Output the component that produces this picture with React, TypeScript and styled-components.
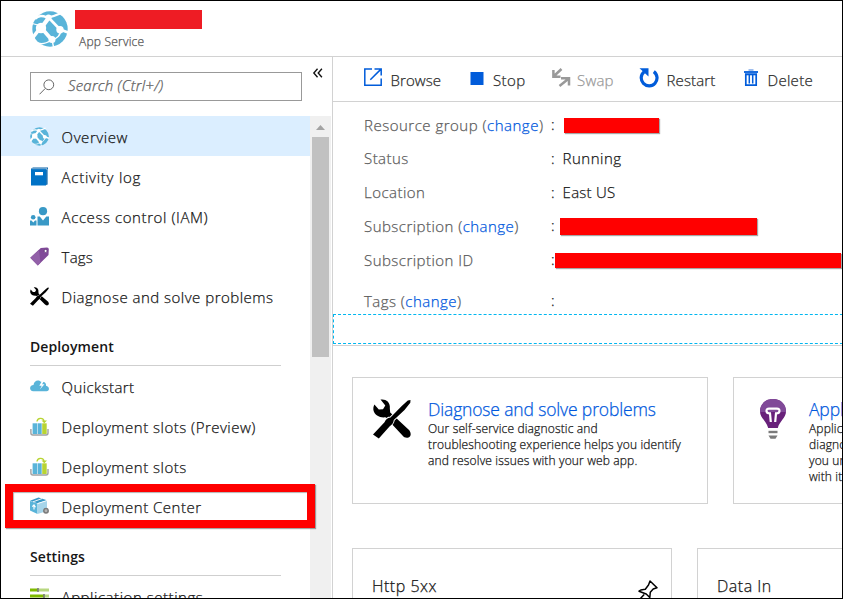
import React from "react";
import styled, { createGlobalStyle, css } from "styled-components";

const GlobalStyle = createGlobalStyle`
  * { box-sizing: border-box; }
  body { margin: 0; background: #fff; overflow: hidden; }
  svg { display: block; flex: none; }
`;

const Window = styled.div`
  width: 843px;
  height: 599px;
  border: 1px solid #000;
  background: #fff;
  overflow: hidden;
  display: flex;
  flex-direction: column;
  font-family: "Open Sans", "Noto Sans", sans-serif;
  font-weight: 300;
  -webkit-text-stroke-width: 0.25px;
  color: #161616;
  white-space: nowrap;
`;

/* ---------- header ---------- */

const Header = styled.header`
  flex: none;
  height: 56px;
  border-bottom: 1px solid #d2d2d2;
  display: flex;
  padding: 9px 0 0 31px;
  > svg { margin-top: 1px; }
`;

const TitleBlock = styled.div`
  margin-left: 7px;
`;

const RedactedName = styled.div`
  width: 127px;
  height: 19px;
  background: #ee1c24;
`;

const Subtitle = styled.div`
  margin: 4px 0 0 4px;
  font-size: 12px;
  line-height: 18px;
  letter-spacing: 0.22px;
  color: #555;
`;

const Body = styled.div`
  flex: 1;
  min-height: 0;
  display: flex;
`;

/* ---------- sidebar ---------- */

const Sidebar = styled.nav`
  flex: none;
  width: 332px;
  border-right: 1px solid #d2d2d2;
  display: flex;
  flex-direction: column;
`;

const SearchRow = styled.div`
  flex: none;
  height: 59px;
  padding: 15px 0 0 29px;
  display: flex;
  align-items: flex-start;
`;

const SearchBox = styled.div`
  width: 272px;
  height: 29px;
  border: 1px solid #999;
  display: flex;
  align-items: center;
  padding-left: 8px;
`;

const Placeholder = styled.span`
  margin: -3px 0 0 13px;
  font-size: 15px;
  font-style: italic;
  letter-spacing: 0.22px;
  color: #5e5e5e;
`;

const Collapse = styled.span`
  margin: -4px 0 0 9.5px;
`;

const MenuArea = styled.div`
  flex: 1;
  min-height: 0;
  display: flex;
`;

const Menu = styled.div`
  position: relative;
  width: 309px;
  height: 100%;
`;

const MenuRow = styled.div<{ $selected?: boolean }>`
  height: 40px;
  padding-left: 29px;
  display: flex;
  align-items: center;
  background: ${(p) => (p.$selected ? "#dbeeff" : "transparent")};
`;

const MenuLabel = styled.span<{ $spacing?: number }>`
  margin: 2px 0 0 12.6px;
  font-size: 15px;
  line-height: 20px;
  letter-spacing: ${(p) => p.$spacing ?? 0.49}px;
`;

const SectionTitle = styled.div<{ $spacing?: number }>`
  height: 50px;
  width: 251px;
  margin-left: 29px;
  padding: 21px 0 0 0;
  border-bottom: 1px solid #cfcfcf;
  font-size: 14px;
  font-weight: 600;
  -webkit-text-stroke-width: 0;
  line-height: 20px;
  letter-spacing: ${(p) => p.$spacing ?? 0.1}px;
`;

const Highlight = styled.div`
  position: absolute;
  left: 4px;
  top: 368px;
  width: 310px;
  height: 44px;
  border: 8px solid #f00;
  box-shadow: 1px 1px 1px rgba(0, 0, 0, 0.35), inset 1px 1px 1px rgba(0, 0, 0, 0.3);
  z-index: 1;
`;

const ScrollTrack = styled.div`
  width: 21px;
  background: #f0f0f0;
  display: flex;
  flex-direction: column;
  padding: 9px 0 0 2px;
`;

const ScrollThumb = styled.div`
  width: 17px;
  height: 220px;
  margin-top: 7px;
  background: #c1c1c1;
`;

/* ---------- main ---------- */

const Main = styled.main`
  flex: 1;
  min-width: 0;
  overflow: hidden;
`;

const Toolbar = styled.div`
  height: 45px;
  border-bottom: 1px solid #d2d2d2;
  padding-left: 29.5px;
  display: grid;
  grid-template-columns: 107.5px 82px 87px 104px auto;
`;

const Command = styled.div<{ $disabled?: boolean; $gap: number; $spacing: number }>`
  display: flex;
  align-items: flex-start;
  gap: ${(p) => p.$gap}px;
  font-size: 15px;
  line-height: 20px;
  letter-spacing: ${(p) => p.$spacing}px;
  color: ${(p) => (p.$disabled ? "#999" : "#2b2b2b")};
  svg { margin-top: 10px; }
  span { margin-top: 13px; }
`;

const Essentials = styled.div`
  padding: 7px 0 0 31px;
`;

const Field = styled.div<{ $last?: boolean }>`
  height: 33.7px;
  display: flex;
  align-items: center;
  font-size: 15px;
  line-height: 20px;
  ${(p) => p.$last && css`margin-top: 7.6px;`}
`;

const FieldName = styled.div<{ $spacing?: number }>`
  width: 187px;
  margin-top: -2.2px;
  letter-spacing: ${(p) => p.$spacing ?? 0.46}px;
  color: #5c5c5c;
`;

const Link = styled.a`
  color: #0058dd;
`;

const Colon = styled.span`
  width: 4px;
  flex: none;
  margin-top: -3px;
`;

const Value = styled.span<{ $spacing?: number }>`
  margin: -2.2px 0 0 7.6px;
  letter-spacing: ${(p) => p.$spacing ?? 0.5}px;
`;

const Redaction = styled.span<{ $width: number; $height: number; $offset: number }>`
  flex: none;
  width: ${(p) => p.$width}px;
  height: ${(p) => p.$height}px;
  margin-left: ${(p) => p.$offset}px;
  background: #f00;
  box-shadow: 1px 1px 1px rgba(0, 0, 0, 0.35);
`;

const TagStrip = styled.div`
  height: 32px;
  margin-top: -4.6px;
  border-bottom: 1px solid #d2d2d2;
  padding-bottom: 1px;
`;

const TagDrop = styled.div`
  height: 30px;
  width: 520px;
  border: 1px dashed #00b7f0;
`;

const CardRow = styled.div<{ $top: number }>`
  display: flex;
  gap: 25px;
  padding: ${(p) => p.$top}px 0 0 19px;
`;

const Card = styled.section`
  flex: none;
  width: 356px;
  height: 127px;
  border: 1px solid #d2d2d2;
  display: flex;
  padding: 20px 0 0 19px;
`;

const CardIcon = styled.div<{ $inset?: number }>`
  width: 56px;
  flex: none;
  padding-left: ${(p) => p.$inset ?? 1}px;
  padding-top: 1px;
`;

const CardTitle = styled.h2`
  margin: 0 0 1px;
  font-size: 17.5px;
  line-height: 22px;
  font-weight: 300;
  letter-spacing: -0.15px;
  color: #0058dd;
`;

const CardLine = styled.div`
  font-size: 12px;
  line-height: 16px;
  letter-spacing: 0.15px;
`;

const ChartCard = styled.section`
  flex: none;
  width: 320px;
  height: 120px;
  border: 1px solid #d2d2d2;
  display: flex;
  justify-content: space-between;
  align-items: flex-start;
  padding: 26px 13px 0 19px;
  svg { margin-top: 5px; }
`;

const ChartTitle = styled.span`
  font-size: 16px;
  line-height: 22px;
  letter-spacing: 0.5px;
`;

/* ---------- icons ---------- */

const Globe = ({ size }: { size: number }) => (
  <svg width={size} height={size} viewBox="0 0 36 36">
    <circle cx="18" cy="18" r="17.7" fill="#59b4d9" />
    <g stroke="#fff" fill="none">
      <path d="M3 8 C7 3.500 11 5 16 6.500 C21 5.500 25 4 29.500 2" strokeWidth="2.400" />
      <path d="M17 6.500 L9.500 16.500" strokeWidth="4.200" />
      <path d="M17 7 L28 18.500" strokeWidth="2.600" />
      <path d="M9 16 L0.500 27" strokeWidth="3.600" />
      <path d="M9 16.500 L20 29" strokeWidth="3.800" />
      <path d="M10 15 L0 12.500" strokeWidth="1.200" />
      <path d="M20 28.500 C25 28 29 24 28.500 18.500" strokeWidth="1.500" />
      <path d="M28 18.500 L36 21.500" strokeWidth="2.800" />
      <path d="M20 28.500 L21.500 36 M6 32 C11 34 15 32 19.500 29" strokeWidth="1.400" />
    </g>
    <g fill="#fff">
      <circle cx="16.500" cy="6.500" r="3" />
      <circle cx="9" cy="17" r="5.200" />
      <circle cx="28" cy="18.700" r="3.700" />
      <circle cx="20" cy="28.600" r="3.500" />
    </g>
  </svg>
);

const LogBook = () => (
  <svg width="19" height="19" viewBox="0 0 19 19">
    <path d="M1 1.500 L3 0.500 H18 V17 L16.500 18" fill="#0a63a8" />
    <path d="M15.800 2 H17.300 V17" fill="none" stroke="#a8cdea" strokeWidth="0.800" />
    <rect x="1" y="2" width="15" height="16.500" fill="#0072c6" />
    <path d="M1.500 1.700 H17" stroke="#a8cdea" strokeWidth="0.700" />
    <rect x="5" y="5" width="8" height="3.300" fill="#fff" />
  </svg>
);

const People = () => (
  <svg width="19" height="19" viewBox="0 0 19 19" fill="#3999c6">
    <circle cx="13" cy="4.200" r="4.100" />
    <path d="M7.500 9.500 H9.800 L13 13.500 L16.300 9.500 H19 V18.500 H7.500 Z" />
    <circle cx="3.200" cy="10.300" r="2.300" />
    <path d="M0 13.500 H1.500 L3.300 15.500 L5 13.500 H6.500 V18.500 H0 Z" />
  </svg>
);

const Tag = () => (
  <svg width="19" height="19" viewBox="0 0 19 19">
    <path d="M0.300 10.800 L10.800 1 L17 0.400 Q19 0.500 18.800 2.500 L18.500 8 L7.800 18.500 Z" fill="#804998" />
    <path d="M0.300 10.800 L9 2.700 L10.500 15.700 L7.800 18.500 Z" fill="#9260a8" />
    <circle cx="15.600" cy="3.900" r="1.500" fill="#fff" stroke="#59306e" strokeWidth="0.700" />
  </svg>
);

const Tools = ({ width, height }: { width: number; height: number }) => (
  <svg width={width} height={height} viewBox="0 0 38 40" preserveAspectRatio="none">
    <path
      d="M7.500 0.600 C13 -0.500 17.500 3.500 16.800 9 L17.200 13.500 L36.300 31.200 C38.500 34 38 37.500 35.500 38.500 C33 39.200 31 38.300 29.500 36.500 L12.500 18.300 C7 19 1.500 16.500 0.400 11 C0.200 8.500 0.700 6.800 1.400 5.500 L5.800 10.500 L10 10.300 L12.300 6.500 Z"
      fill="#000"
    />
    <path
      d="M0 35.500 L11.500 23.200 C12.500 21 14.500 18.500 17.500 18.500 L28.500 7.200 L34.800 1.600 L37.500 1 L37.300 3.800 L31.500 11 L20.800 21 C20.500 24.500 18.500 26 16.500 27.500 L5.800 39.600 Z"
      fill="#000"
      stroke="#fff"
      strokeWidth="1.800"
      paintOrder="stroke"
    />
  </svg>
);

const CloudBolt = () => (
  <svg width="19" height="19" viewBox="0 0 19 19">
    <path d="M3.300 14.300 C-1.200 14 -0.800 8 3.500 8 C4 3.500 8.500 2.300 11 5 C14.500 4 16.500 6.300 16 8.800 C19.700 9.500 20 14 16.500 14.300 Z" fill="#59b4d9" />
    <path d="M12.500 3 L9.300 8.700 H11.800 L9.800 12.500 L14.500 7.300 H12 L14.500 3.300 Z" fill="#fff" />
  </svg>
);

const Slots = () => (
  <svg width="19" height="19" viewBox="0 0 19 19">
    <path d="M0.900 12 V16 Q0.900 18 2.900 18 H16 Q18 18 18 16 V12" fill="none" stroke="#a0a1a2" strokeWidth="1.400" />
    <rect x="2.600" y="6.300" width="4.600" height="10.700" fill="#59b4d9" />
    <rect x="7.700" y="6.300" width="4" height="10.700" fill="#59b4d9" />
    <rect x="12.200" y="6.300" width="4.500" height="10.700" fill="#b8d432" />
    <path d="M7 4.500 C7.500 0.800 13 0 14 4" fill="none" stroke="#b8d432" strokeWidth="1.400" />
    <path d="M11.500 3.500 H17 L14.300 6.300 Z" fill="#b8d432" />
  </svg>
);

const Package = () => (
  <svg width="19" height="19" viewBox="0 0 19 19">
    <path d="M0 4 L7.500 6.500 V17 L0 13.500 Z" fill="#59b4d9" />
    <path d="M7.500 6.500 L17 3.500 V14 L7.500 17 Z" fill="#a6d5ea" />
    <path d="M0 3.700 L8.500 0.500 L17 3.200 L7.500 6.300 Z" fill="#3999c6" />
    <path d="M3 4.800 L12 1.600 M7.500 6.600 L17 3.500" stroke="#fff" strokeWidth="0.900" />
    <path d="M4 12.500 V8 M2.300 9.700 L4 7.800 L5.500 10.300" stroke="#fff" strokeWidth="1.100" fill="none" />
    <circle cx="16" cy="13.800" r="2.200" fill="#b4b4b4" stroke="#7a7a7a" strokeWidth="1.500" />
  </svg>
);

const Sliders = () => (
  <svg width="19" height="19" viewBox="0 0 19 19">
    <path d="M0 3 H8 M0 9 H14 M0 15 H6" stroke="#7fba00" strokeWidth="3" />
    <path d="M8 3 H19 M14 9 H19 M6 15 H19" stroke="#b8d780" strokeWidth="3" />
    <path d="M8 1 V5 M14 7 V11" stroke="#7a7a7a" strokeWidth="1.600" />
  </svg>
);

const Magnifier = () => (
  <svg width="16" height="16" viewBox="0 0 16 16" fill="none" stroke="#666" strokeWidth="1">
    <circle cx="9.800" cy="5.800" r="4.900" />
    <path d="M6.200 9.500 L0.500 15.300" />
  </svg>
);

const DoubleChevron = () => (
  <svg width="12" height="10" viewBox="0 0 12 11" fill="none" stroke="#111" strokeWidth="1.500">
    <path d="M5.500 0.800 L1.400 5.500 L5.500 10.200 M10.300 0.800 L6.200 5.500 L10.300 10.200" />
  </svg>
);

const ArrowUp = () => (
  <svg width="17" height="5" viewBox="0 0 17 5">
    <path d="M8.500 0 L13 5 H4 Z" fill="#a3a3a3" />
  </svg>
);

const BrowseIcon = () => (
  <svg width="20" height="20" viewBox="0 0 20 20" fill="none" stroke="#015cda" strokeWidth="1.500">
    <path d="M9 1.900 H1.800 V18.200 H18.200 V11.500 M11.500 1.900 H18.200 V8.500 M18 2.100 L7.300 12.800" />
  </svg>
);

const StopIcon = () => (
  <svg width="14" height="20" viewBox="0 0 14 20">
    <rect x="0.500" y="5" width="13" height="13" fill="#015cda" />
  </svg>
);

const SwapIcon = () => (
  <svg width="19" height="21" viewBox="0 0 19 21" fill="none" stroke="#999" strokeWidth="2.500">
    <path d="M9.500 2 L2 9 M1.400 3 V9.700 H8.500" />
    <path d="M7.500 19 L16.500 11.800 M9 11.200 H17 V18.500" />
  </svg>
);

const RestartIcon = () => (
  <svg width="20" height="21" viewBox="0 0 20 21">
    <path d="M5.200 4.800 A7.900 7.900 0 1 0 14.800 4.600" fill="none" stroke="#015cda" strokeWidth="3.200" />
    <path d="M0.500 1.300 H9.500 V9.500 Z" fill="#015cda" />
  </svg>
);

const TrashIcon = () => (
  <svg width="16" height="20" viewBox="0 0 16 20">
    <path d="M5.500 3 H10.500" stroke="#7fa9e8" strokeWidth="1.500" />
    <path d="M1 5 H15" stroke="#015cda" strokeWidth="1.800" />
    <path d="M2.800 7 H13.200 V18.200 H2.800 Z" fill="#fff" stroke="#015cda" strokeWidth="1.700" />
    <path d="M6.300 7 V16.500 M9.700 7 V16.500" stroke="#015cda" strokeWidth="1.500" />
    <path d="M2 7 H14 V8.300 H2 Z" fill="#015cda" />
  </svg>
);

const Bulb = () => (
  <svg width="28" height="40" viewBox="0 0 28 40">
    <path d="M14 0 C22 0 27 5.500 27 12.500 C27 19 20.500 22 18.800 29 H9.200 C7.500 22 1 19 1 12.500 C1 5.500 6 0 14 0 Z" fill="#68217a" />
    <path d="M14 0 C22 0 27 5.500 27 12.500 V13 H1 V12.500 C1 5.500 6 0 14 0 Z" fill="#804998" />
    <path d="M11.800 23 L11 14.300 C6.500 14.500 6.500 9.600 10 9.600 H18 C21.500 9.600 21.500 14.500 17 14.300 L16.200 23" fill="none" stroke="#fff" strokeWidth="2.200" />
    <path d="M9.500 33 H18.500" stroke="#7a7a7a" strokeWidth="2.400" />
    <path d="M9.500 36.500 H18.500 L16.500 39.700 H11.500 Z" fill="#7a7a7a" />
  </svg>
);

const PinIcon = () => (
  <svg width="20" height="20" viewBox="0 0 20 20" fill="none" stroke="#000" strokeWidth="1.500" strokeLinejoin="round">
    <path d="M12 1 L19 7.800 L15.200 9 L12.300 12.200 L11.800 17.500 L8.200 14 L1 11.200 L2.800 10 L7.300 9.200 L10.500 5 Z M6.200 14.500 L1.500 19.500" />
  </svg>
);

/* ---------- page ---------- */

type Entry = { label: string; icon: React.ReactNode; spacing?: number; selected?: boolean };

const general: Entry[] = [
  { label: "Overview", icon: <Globe size={19} />, selected: true, spacing: 0.58 },
  { label: "Activity log", icon: <LogBook />, spacing: 0.74 },
  { label: "Access control (IAM)", icon: <People />, spacing: 0.58 },
  { label: "Tags", icon: <Tag />, spacing: 0.2 },
  { label: "Diagnose and solve problems", icon: <Tools width={19} height={19} /> },
];

const deployment: Entry[] = [
  { label: "Quickstart", icon: <CloudBolt />, spacing: 0.4 },
  { label: "Deployment slots (Preview)", icon: <Slots /> },
  { label: "Deployment slots", icon: <Slots /> },
  { label: "Deployment Center", icon: <Package /> },
];

const settings: Entry[] = [{ label: "Application settings", icon: <Sliders />, spacing: 0.54 }];

const MenuItems = ({ entries }: { entries: Entry[] }) => (
  <>
    {entries.map((e) => (
      <MenuRow key={e.label} $selected={e.selected}>
        {e.icon}
        <MenuLabel $spacing={e.spacing}>{e.label}</MenuLabel>
      </MenuRow>
    ))}
  </>
);

export default function App() {
  return (
    <>
      <GlobalStyle />
      <Window>
        <Header>
          <Globe size={36} />
          <TitleBlock>
            <RedactedName />
            <Subtitle>App Service</Subtitle>
          </TitleBlock>
        </Header>
        <Body>
          <Sidebar>
            <SearchRow>
              <SearchBox>
                <Magnifier />
                <Placeholder>Search (Ctrl+/)</Placeholder>
              </SearchBox>
              <Collapse>
                <DoubleChevron />
              </Collapse>
            </SearchRow>
            <MenuArea>
              <Menu>
                <MenuItems entries={general} />
                <SectionTitle $spacing={0.1}>Deployment</SectionTitle>
                <MenuItems entries={deployment} />
                <SectionTitle>Settings</SectionTitle>
                <MenuItems entries={settings} />
                <Highlight />
              </Menu>
              <ScrollTrack>
                <ArrowUp />
                <ScrollThumb />
              </ScrollTrack>
            </MenuArea>
          </Sidebar>
          <Main>
            <Toolbar>
              <Command $gap={8} $spacing={0.1}><BrowseIcon /><span>Browse</span></Command>
              <Command $gap={9} $spacing={0.4}><StopIcon /><span>Stop</span></Command>
              <Command $gap={6} $spacing={0.2} $disabled><SwapIcon /><span>Swap</span></Command>
              <Command $gap={7.5} $spacing={0.15}><RestartIcon /><span>Restart</span></Command>
              <Command $gap={8.5} $spacing={0.3}><TrashIcon /><span>Delete</span></Command>
            </Toolbar>
            <Essentials>
              <Field>
                <FieldName $spacing={0.5}>Resource group (<Link>change</Link>)</FieldName>
                <Colon>:</Colon>
                <Redaction $width={95} $height={15} $offset={9} />
              </Field>
              <Field>
                <FieldName>Status</FieldName>
                <Colon>:</Colon>
                <Value>Running</Value>
              </Field>
              <Field>
                <FieldName>Location</FieldName>
                <Colon>:</Colon>
                <Value $spacing={0.25}>East US</Value>
              </Field>
              <Field>
                <FieldName>Subscription (<Link>change</Link>)</FieldName>
                <Colon>:</Colon>
                <Redaction $width={197} $height={17} $offset={5} />
              </Field>
              <Field>
                <FieldName>Subscription ID</FieldName>
                <Colon>:</Colon>
                <Redaction $width={286} $height={15} $offset={0} />
              </Field>
              <Field $last>
                <FieldName>Tags (<Link>change</Link>)</FieldName>
                <Colon>:</Colon>
              </Field>
            </Essentials>
            <TagStrip>
              <TagDrop />
            </TagStrip>
            <CardRow $top={31}>
              <Card>
                <CardIcon><Tools width={38} height={40} /></CardIcon>
                <div>
                  <CardTitle>Diagnose and solve problems</CardTitle>
                  <CardLine>Our self-service diagnostic and</CardLine>
                  <CardLine>troubleshooting experience helps you identify</CardLine>
                  <CardLine>and resolve issues with your web app.</CardLine>
                </div>
              </Card>
              <Card>
                <CardIcon $inset={6}><Bulb /></CardIcon>
                <div>
                  <CardTitle>Application Insights</CardTitle>
                  <CardLine>Application Insights helps you detect and</CardLine>
                  <CardLine>diagnose quality issues in your apps, and helps</CardLine>
                  <CardLine>you understand what your users actually do</CardLine>
                  <CardLine>with it.</CardLine>
                </div>
              </Card>
            </CardRow>
            <CardRow $top={44}>
              <ChartCard>
                <ChartTitle>Http 5xx</ChartTitle>
                <PinIcon />
              </ChartCard>
              <ChartCard>
                <ChartTitle>Data In</ChartTitle>
              </ChartCard>
            </CardRow>
          </Main>
        </Body>
      </Window>
    </>
  );
}
